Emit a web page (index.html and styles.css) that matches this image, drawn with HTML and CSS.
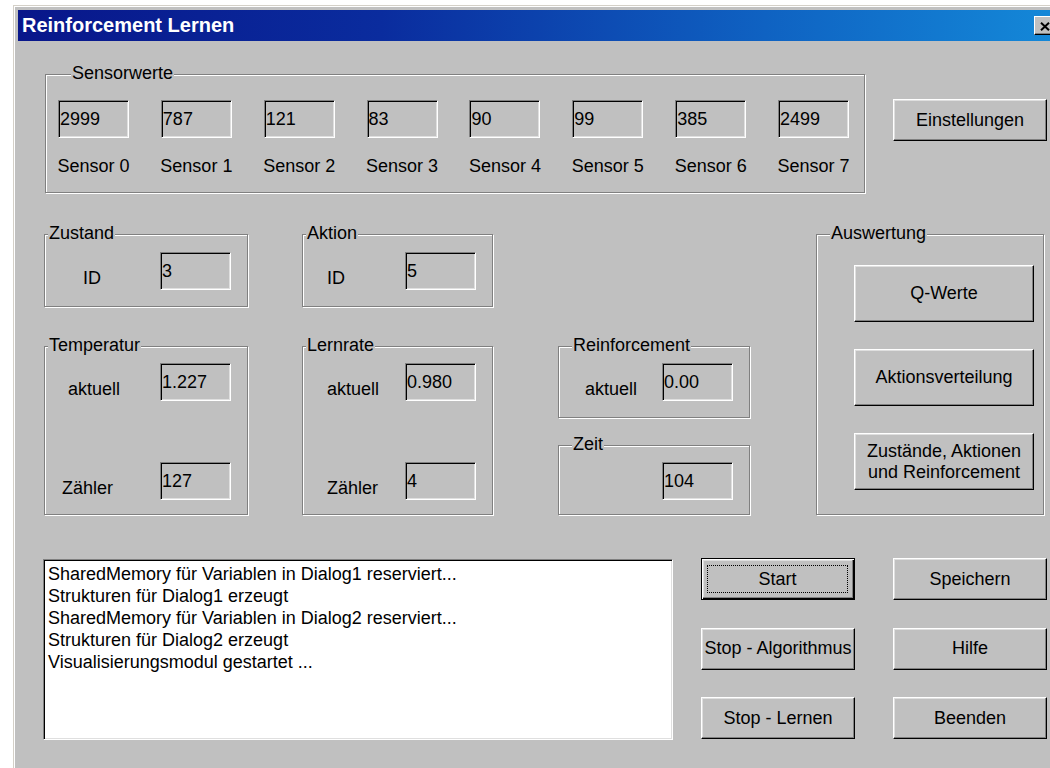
FILE: index.html
```html
<!DOCTYPE html>
<html lang="de">
<head>
<meta charset="utf-8">
<title>Reinforcement Lernen</title>
<link rel="stylesheet" href="styles.css">
</head>
<body>
<div class="window">
  <div class="titlebar">
    <span class="caption">Reinforcement Lernen</span>
    <span class="close" aria-label="Schließen">
      <svg width="10" height="9" viewBox="0 0 10 9"><path d="M1 0.8 L9 8.2 M9 0.8 L1 8.2" stroke="#000" stroke-width="2" fill="none"/></svg>
    </span>
  </div>

  <div class="client">
    <div class="row-top">
      <div class="group sensors">
        <div class="group-title wide">Sensorwerte</div>
        <div class="sensor-grid">
          <span class="edit">2999</span>
          <span class="edit">787</span>
          <span class="edit">121</span>
          <span class="edit">83</span>
          <span class="edit">90</span>
          <span class="edit">99</span>
          <span class="edit">385</span>
          <span class="edit">2499</span>
          <span class="sensor-name">Sensor 0</span>
          <span class="sensor-name">Sensor 1</span>
          <span class="sensor-name">Sensor 2</span>
          <span class="sensor-name">Sensor 3</span>
          <span class="sensor-name">Sensor 4</span>
          <span class="sensor-name">Sensor 5</span>
          <span class="sensor-name">Sensor 6</span>
          <span class="sensor-name">Sensor 7</span>
        </div>
      </div>
      <div class="btn settings">Einstellungen</div>
    </div>

    <div class="row-mid">
      <div class="col col-a">
        <div class="group short">
          <div class="group-title">Zustand</div>
          <div class="field first-id"><span class="lbl">ID</span><span class="edit">3</span></div>
        </div>
        <div class="group tall">
          <div class="group-title">Temperatur</div>
          <div class="field current"><span class="lbl">aktuell</span><span class="edit">1.227</span></div>
          <div class="field counter"><span class="lbl">Zähler</span><span class="edit">127</span></div>
        </div>
      </div>

      <div class="col col-b">
        <div class="group short">
          <div class="group-title">Aktion</div>
          <div class="field first-id"><span class="lbl">ID</span><span class="edit">5</span></div>
        </div>
        <div class="group tall">
          <div class="group-title">Lernrate</div>
          <div class="field current"><span class="lbl">aktuell</span><span class="edit">0.980</span></div>
          <div class="field counter"><span class="lbl">Zähler</span><span class="edit">4</span></div>
        </div>
      </div>

      <div class="col col-c">
        <div class="group reinf">
          <div class="group-title wide">Reinforcement</div>
          <div class="field current"><span class="lbl">aktuell</span><span class="edit">0.00</span></div>
        </div>
        <div class="group time">
          <div class="group-title wide">Zeit</div>
          <div class="field"><span class="edit">104</span></div>
        </div>
      </div>

      <div class="col col-d">
        <div class="group eval">
          <div class="group-title wide">Auswertung</div>
          <div class="eval-buttons">
            <div class="btn">Q-Werte</div>
            <div class="btn">Aktionsverteilung</div>
            <div class="btn">Zustände, Aktionen<br>und Reinforcement</div>
          </div>
        </div>
      </div>
    </div>

    <div class="row-bottom">
      <div class="log">
        <div>SharedMemory für Variablen in Dialog1 reserviert...</div>
        <div>Strukturen für Dialog1 erzeugt</div>
        <div>SharedMemory für Variablen in Dialog2 reserviert...</div>
        <div>Strukturen für Dialog2 erzeugt</div>
        <div>Visualisierungsmodul gestartet ...</div>
      </div>
      <div class="actions">
        <div class="btn default"><span class="focus">Start</span></div>
        <div class="btn">Speichern</div>
        <div class="btn">Stop - Algorithmus</div>
        <div class="btn">Hilfe</div>
        <div class="btn">Stop - Lernen</div>
        <div class="btn">Beenden</div>
      </div>
    </div>
  </div>
</div>
</body>
</html>
```

FILE: styles.css
```css
* {
  box-sizing: border-box;
}

html,
body {
  margin: 0;
  height: 100%;
}

body {
  background: #ffffff;
  overflow: hidden;
  font-family: "Liberation Sans", Arial, sans-serif;
  font-size: 18px;
  line-height: 20px;
  color: #000000;
}

/* dialog frame */
.window {
  margin: 5px 0 0 13px;
  width: 1047px;
  height: 800px;
  background: #c0c0c0;
  border: 1px solid #d4d0c8;
  box-shadow: inset 1px 1px 0 #ffffff;
  padding: 4px 4px 0 4px;
}

.titlebar {
  display: flex;
  align-items: center;
  height: 31px;
  padding-left: 4px;
  background: linear-gradient(90deg, #08168a 0%, #0a2c9e 35%, #0f62c2 72%, #1488d8 100%);
  color: #ffffff;
  font-weight: bold;
  font-size: 20px;
  line-height: 31px;
}

.close {
  margin-left: auto;
  margin-right: 0;
  width: 21px;
  height: 19px;
  display: flex;
  align-items: center;
  justify-content: center;
  padding-top: 1px;
  background: #c0c0c0;
  border: 1px solid;
  border-color: #ffffff #000000 #000000 #ffffff;
  box-shadow: inset -1px -1px 0 #808080;
}

.client {
  padding: 33px 0 0 26px;
}

/* etched group box */
.group {
  border: 1px solid #808080;
  box-shadow: inset 1px 1px 0 #ffffff, 1px 1px 0 #ffffff;
}

.group-title {
  margin: -12px 0 0 3px;
  padding: 0 1px;
  width: fit-content;
  height: 20px;
  line-height: 20px;
  background: #c0c0c0;
  white-space: nowrap;
}

.group-title.wide {
  margin-left: 13px;
}

/* sunken read-only edit */
.edit {
  display: flex;
  align-items: center;
  width: 71px;
  height: 38px;
  padding: 0 0 0 1px;
  border: 1px solid;
  border-color: #808080 #ffffff #ffffff #808080;
  box-shadow: inset 1px 1px 0 #000000, inset -1px -1px 0 #dfdfdf;
  background: #c0c0c0;
  line-height: 22px;
  white-space: nowrap;
}

/* raised push button */
.btn {
  display: flex;
  align-items: center;
  justify-content: center;
  text-align: center;
  white-space: nowrap;
  background: #c0c0c0;
  border: 1px solid;
  border-color: #ffffff #000000 #000000 #ffffff;
  box-shadow: inset -1px -1px 0 #808080, inset 1px 1px 0 #dfdfdf;
  line-height: 21px;
}

.btn.default {
  border-color: #000000;
  box-shadow: inset 1px 1px 0 #ffffff, inset -1px -1px 0 #000000, inset -2px -2px 0 #808080, inset 2px 2px 0 #dfdfdf;
  padding: 6px 6px 6px 5px;
}

.focus {
  flex: 1;
  align-self: stretch;
  display: flex;
  align-items: center;
  justify-content: center;
  border: 1px dotted #000000;
}

/* top row: sensor values */
.row-top {
  display: flex;
  align-items: flex-start;
}

.sensors {
  margin-left: 1px;
  width: 820px;
  padding: 0 0 16px 12px;
}

.sensor-grid {
  margin-top: 17px;
  display: grid;
  grid-template-columns: repeat(8, 71px);
  column-gap: 31.86px;
  row-gap: 18px;
}

.sensor-name {
  justify-self: center;
  white-space: nowrap;
  line-height: 20px;
}

.settings {
  margin: 25px 0 0 28px;
  width: 154px;
  height: 42px;
}

/* middle row: state, rates, evaluation */
.row-mid {
  display: flex;
  align-items: flex-start;
  margin-top: 41px;
}

.col {
  display: flex;
  flex-direction: column;
}

.col-a {
  width: 204px;
  gap: 39px;
}

.col-b {
  width: 191px;
  margin-left: 54px;
  gap: 39px;
}

.col-c {
  width: 192px;
  margin-left: 65px;
  padding-top: 112px;
  gap: 27px;
}

.col-d {
  width: 228px;
  margin-left: 66px;
}

.short {
  height: 73px;
}

.tall {
  height: 169px;
}

.reinf {
  height: 72px;
}

.time {
  height: 70px;
}

.eval {
  height: 281px;
}

.field {
  display: flex;
  align-items: flex-end;
  margin: 8px 16px 0 0;
}

.field.first-id {
  margin-top: 9px;
}

.field + .field {
  margin-top: 61px;
}

.field .edit {
  margin-left: auto;
}

.lbl {
  margin: 0 0 2px 24px;
  line-height: 20px;
  white-space: nowrap;
}

.col-c .lbl {
  margin-left: 26px;
}

/* left column labels sit at their own indents */
.col-a .first-id .lbl {
  margin-left: 38px;
}

.col-a .current .lbl {
  margin-left: 23px;
}

.col-a .counter .lbl {
  margin-left: 17px;
}

.eval-buttons {
  display: flex;
  flex-direction: column;
  gap: 27px;
  margin: 22px 0 0 37px;
}

.eval-buttons .btn {
  width: 180px;
  height: 57px;
}

/* bottom row: message log and commands */
.row-bottom {
  display: flex;
  align-items: flex-start;
  margin-top: 43px;
}

.log {
  margin: 1px 0 0 -1px;
  width: 630px;
  height: 181px;
  padding: 3px 0 0 4px;
  background: #ffffff;
  border: 1px solid;
  border-color: #808080 #ffffff #ffffff #808080;
  box-shadow: inset 1px 1px 0 #000000, inset -1px -1px 0 #dfdfdf;
  line-height: 22px;
  white-space: nowrap;
  overflow: hidden;
}

.actions {
  margin-left: 28px;
  display: grid;
  grid-template-columns: 154px 154px;
  grid-auto-rows: 42px;
  column-gap: 38px;
  row-gap: 27.5px;
}
```
